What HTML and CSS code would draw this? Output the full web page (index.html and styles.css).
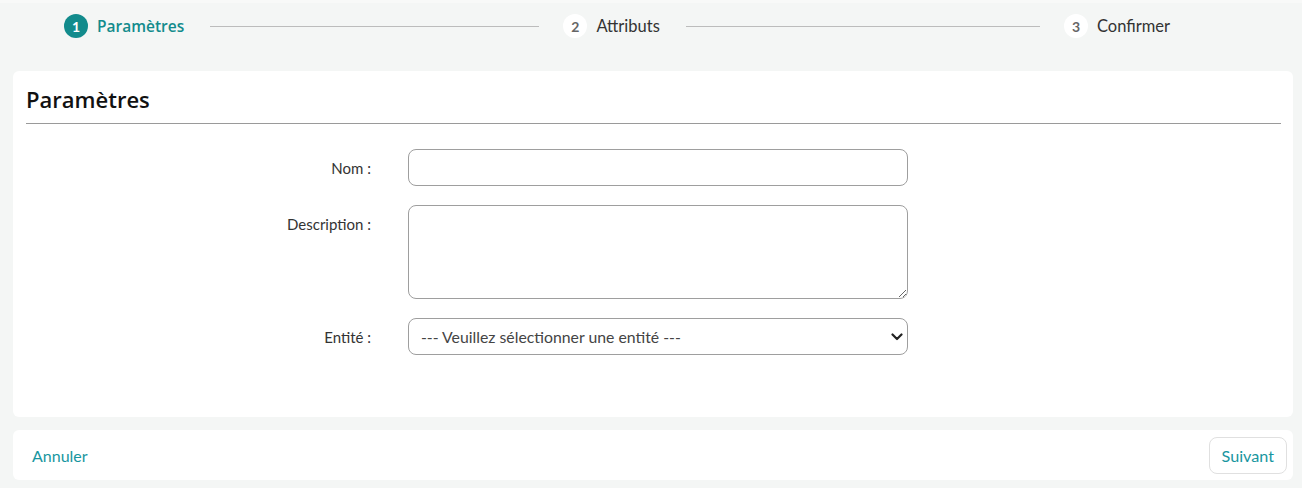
FILE: index.html
```html
<!DOCTYPE html>
<html lang="fr">
<head>
    <meta charset="UTF-8">
    <meta name="viewport" content="width=device-width, initial-scale=1.0">
    <title>Paramètres</title>
    <link rel="stylesheet" href="styles.css">
</head>
<body>
    <nav class="stepper">
        <div class="step active">
            <span class="step-num">1</span>
            <span class="step-label">Paramètres</span>
        </div>
        <div class="step-line first"></div>
        <div class="step">
            <span class="step-num">2</span>
            <span class="step-label">Attributs</span>
        </div>
        <div class="step-line second"></div>
        <div class="step">
            <span class="step-num">3</span>
            <span class="step-label">Confirmer</span>
        </div>
    </nav>

    <section class="card">
        <h2 class="card-title">Paramètres</h2>
        <form class="form-grid">
            <label class="form-label" for="nom">Nom :</label>
            <input class="form-control" id="nom" type="text">

            <label class="form-label top" for="description">Description :</label>
            <textarea class="form-control textarea" id="description"></textarea>

            <label class="form-label" for="entite">Entité :</label>
            <div class="select-wrap">
                <select class="form-control select" id="entite">
                    <option>--- Veuillez sélectionner une entité ---</option>
                </select>
                <svg class="chevron" width="12" height="8" viewBox="0 0 12 8">
                    <path d="M1.5 1.5 L6 6 L10.5 1.5" fill="none" stroke="#222" stroke-width="2.2" stroke-linecap="round" stroke-linejoin="round"/>
                </svg>
            </div>
        </form>
    </section>

    <footer class="actions">
        <a href="#" class="link">Annuler</a>
        <button class="btn-next" type="button">Suivant</button>
    </footer>
</body>
</html>
```

FILE: styles.css
```css
:root {
    --teal: #128b8c;
    --teal-text: #1896a0;
    --bg: #f4f6f5;
    --text: #333;
}

* {
    margin: 0;
    padding: 0;
    box-sizing: border-box;
}

body {
    background: var(--bg);
    font-family: 'Lato', 'Noto Sans', sans-serif;
    color: var(--text);
    border-top: 3px solid #f8f9f8;
    padding: 0 9px 0 13px;
}

/* stepper */
.stepper {
    display: flex;
    align-items: center;
    height: 45px;
    padding: 1px 123px 0 51px;
    margin-bottom: 23px;
}

.step {
    display: flex;
    align-items: center;
    gap: 9px;
    font-size: 16.5px;
    white-space: nowrap;
}

.step-num {
    width: 24px;
    height: 24px;
    border-radius: 50%;
    background: #fff;
    color: #666;
    font-size: 14px;
    font-weight: 700;
    display: flex;
    align-items: center;
    justify-content: center;
}

.step-label {
    color: #333;
}

.step.active .step-num {
    background: var(--teal);
    color: #fff;
}

.step.active .step-label {
    color: var(--teal);
    font-family: 'Open Sans', sans-serif;
    font-size: 15.5px;
    font-weight: 600;
}

.step-line {
    height: 1px;
    background: #bcbcbc;
    margin: 1px 24px 0 26px;
}

.step-line.first { flex: 329; }
.step-line.second { flex: 354; }

/* card */
.card {
    background: #fff;
    border-radius: 6px;
    padding: 13px 12px 62px 13px;
}

.card-title {
    font-family: 'Open Sans', sans-serif;
    font-size: 22px;
    font-weight: 600;
    color: #111;
    line-height: 28px;
    padding: 1px 0 10px;
    border-bottom: 1px solid #9a9a9a;
    margin-bottom: 25px;
}

.form-grid {
    display: grid;
    grid-template-columns: 345px 500px;
    column-gap: 37px;
    row-gap: 19px;
    align-items: center;
}

.form-label {
    text-align: right;
    font-size: 15px;
    color: #333;
}

.form-label.top {
    align-self: start;
    padding-top: 10px;
}

.form-control {
    width: 100%;
    height: 37px;
    border: 1px solid #9e9e9e;
    border-radius: 8px;
    background: #fff;
    font-family: inherit;
    font-size: 15.8px;
    color: #444;
    padding: 0 12px;
    outline: none;
}

.textarea {
    height: 94px;
    resize: vertical;
    display: block;
}

.select-wrap {
    position: relative;
}

.select {
    appearance: none;
    -webkit-appearance: none;
}

.chevron {
    position: absolute;
    right: 5px;
    top: 15px;
    pointer-events: none;
}

/* footer */
.actions {
    margin-top: 13px;
    background: #fff;
    border-radius: 6px;
    height: 50px;
    display: flex;
    align-items: center;
    justify-content: space-between;
    padding: 0 6px 0 19px;
}

.link {
    color: var(--teal-text);
    text-decoration: none;
    font-size: 16px;
}

.btn-next {
    height: 37px;
    padding: 0 12px;
    border: 1px solid #e0e0e0;
    border-radius: 8px;
    background: #fff;
    color: var(--teal-text);
    font-family: inherit;
    font-size: 16.2px;
}
```
